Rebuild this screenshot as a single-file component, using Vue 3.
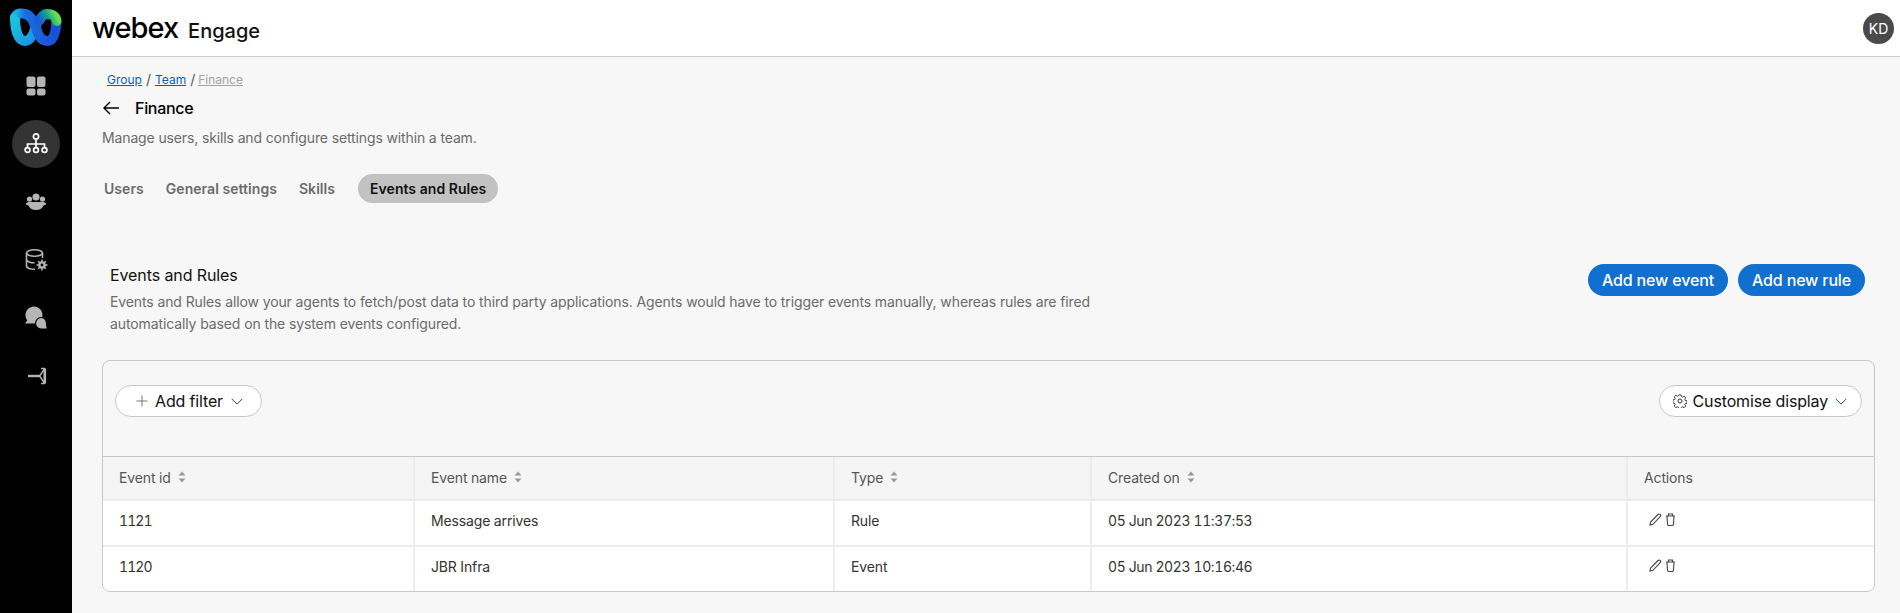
<script setup>
const navTop = ['Group', 'Team']
const tabs = ['Users', 'General settings', 'Skills']
const columns = [
  { label: 'Event id', sort: true },
  { label: 'Event name', sort: true },
  { label: 'Type', sort: true },
  { label: 'Created on', sort: true },
  { label: 'Actions', sort: false }
]
const rows = [
  { id: '1121', name: 'Message arrives', type: 'Rule', created: '05 Jun 2023 11:37:53' },
  { id: '1120', name: 'JBR Infra', type: 'Event', created: '05 Jun 2023 10:16:46' }
]
</script>

<template>
  <div class="shell">
    <aside class="rail">
      <svg class="logo" viewBox="0 0 54 40" width="54" height="40">
        <defs>
          <linearGradient id="wa" x1="0" y1="0" x2="1" y2="1">
            <stop offset="0" stop-color="#1cc4e0" />
            <stop offset="1" stop-color="#1a8fe6" />
          </linearGradient>
          <linearGradient id="wb" x1="0" y1="0" x2="1" y2="0">
            <stop offset="0" stop-color="#19b0e4" />
            <stop offset="0.22" stop-color="#1a6fe0" />
            <stop offset="1" stop-color="#1a4fd8" />
          </linearGradient>
          <linearGradient id="wc" x1="0" y1="0.6" x2="1" y2="0.4">
            <stop offset="0" stop-color="#1a5fd8" />
            <stop offset="0.5" stop-color="#12a08f" />
            <stop offset="1" stop-color="#62e04f" />
          </linearGradient>
        </defs>
        <path d="M6 9C6 22 9 33 16 33C22 33 25 25 27 18" fill="none" stroke="url(#wa)" stroke-width="10" stroke-linecap="round" />
        <path d="M7 8C9 5 13 5 16 6C22 7 25 14 27 20C29 27 32 33 38 33C45 33 47 23 47.5 13" fill="none" stroke="url(#wb)" stroke-width="10" stroke-linecap="butt" />
        <path d="M30 13C32 9 34 6 38 6C43 6 47 8 47.5 13" fill="none" stroke="url(#wc)" stroke-width="10" stroke-linecap="round" />
      </svg>

      <nav class="rail-nav">
        <button class="rail-btn">
          <svg viewBox="0 0 24 24" width="24" height="24">
            <rect x="2.5" y="2.5" width="9" height="10.5" rx="2" fill="#b5b5b5" />
            <rect x="13" y="2.5" width="8.5" height="10.5" rx="2" fill="#b5b5b5" />
            <rect x="2.5" y="14.5" width="9" height="7" rx="2" fill="#b5b5b5" />
            <rect x="13" y="14.5" width="8.5" height="7" rx="2" fill="#b5b5b5" />
          </svg>
        </button>
        <button class="rail-btn rail-btn-active">
          <svg viewBox="0 0 24 24" width="24" height="24" fill="none" stroke="#fff" stroke-width="1.7">
            <circle cx="12" cy="4.5" r="2.6" />
            <path d="M12 7v5M3.5 15v-3h17v3M12 12v3" />
            <circle cx="3.5" cy="18" r="2.4" />
            <circle cx="12" cy="18" r="2.4" />
            <circle cx="20.5" cy="18" r="2.4" />
          </svg>
        </button>
        <button class="rail-btn">
          <svg viewBox="0 0 24 24" width="24" height="24" fill="#b5b5b5">
            <circle cx="12" cy="7" r="3.6" />
            <circle cx="5.5" cy="9" r="2.6" />
            <circle cx="18.5" cy="9" r="2.6" />
            <path d="M1.5 14c2-2.500 5-2.500 6.500-2h8c1.500-.5 4.500-.5 6.500 2c-1 1-2 1.200-3 1.500c-1 3-4 4.500-7.500 4.500s-6.500-1.500-7.500-4.500c-1-.3-2-.5-3-1.500z" />
          </svg>
        </button>
        <button class="rail-btn">
          <svg viewBox="0 0 24 24" width="24" height="24" fill="none" stroke="#b5b5b5" stroke-width="1.6">
            <ellipse cx="10.5" cy="5" rx="8" ry="3.2" />
            <path d="M2.500 5v13c0 2 4 3.300 8.500 3.300M18.500 5v5M2.500 11.500c0 2 4 3.300 8 3.300" />
            <circle cx="18" cy="17" r="3.8" fill="#b5b5b5" stroke="none" />
            <circle cx="18" cy="17" r="1.4" fill="#000" stroke="none" />
            <path d="M18 11.500v2.500M18 20v2.500M12.500 17h2.500M21 17h2.500M14.200 13.200l1.700 1.700M20.100 19.100l1.700 1.700M14.200 20.800l1.700-1.700M20.100 14.900l1.700-1.700" stroke-width="1.5" />
          </svg>
        </button>
        <button class="rail-btn">
          <svg viewBox="0 0 24 24" width="24" height="24" fill="#b5b5b5">
            <path d="M10 .5c4.700 0 8.500 3.800 8.500 8.500c0 4.700-3.800 8.500-8.500 8.500H1l2.200-3c-1-1.500-1.700-3.300-1.700-5.500C1.500 4.300 5.300 .5 10 .5z" />
            <path d="M17 11.500c3 0 5.500 2.500 5.500 5.500c0 1.500 .3 3.500 1 6h-6.500c-3 0-5.500-2.500-5.500-5.500s2.500-6 5.500-6z" stroke="#000" stroke-width="1.2" />
          </svg>
        </button>
        <button class="rail-btn">
          <svg viewBox="0 0 24 24" width="24" height="24" fill="none" stroke="#b5b5b5">
            <path d="M4 12h12" stroke-width="2.4" />
            <path d="M20.500 5l-5 7l5 7" stroke-width="1.4" />
            <path d="M20.800 4.500v15" stroke-width="2.6" />
            <path d="M17 4.500h4M17 19.500h4" stroke-width="1.5" />
          </svg>
        </button>
      </nav>
    </aside>

    <div class="main">
      <header class="topbar">
        <div class="brand">
          <span class="wordmark">webex</span>
          <span class="product">Engage</span>
        </div>
        <div class="avatar">KD</div>
      </header>

      <main class="content">
        <div class="crumbs">
          <template v-for="c in navTop" :key="c">
            <a class="crumb">{{ c }}</a>
            <span class="crumb-sep">/</span>
          </template>
          <a class="crumb crumb-current">Finance</a>
        </div>

        <div class="title-row">
          <svg viewBox="0 0 16 14" width="16" height="14" fill="none" stroke="#000" stroke-width="1.4">
            <path d="M1 7h15M7 1L1 7l6 6" />
          </svg>
          <h1 class="title">Finance</h1>
        </div>
        <p class="subtitle">Manage users, skills and configure settings within a team.</p>

        <div class="tabs">
          <span v-for="t in tabs" :key="t" class="tab">{{ t }}</span>
          <span class="tab tab-active">Events and Rules</span>
        </div>

        <section class="intro">
          <div class="intro-text">
            <h2 class="intro-title">Events and Rules</h2>
            <p class="intro-desc">Events and Rules allow your agents to fetch/post data to third party applications. Agents would have to trigger events manually, whereas rules are fired automatically based on the system events configured.</p>
          </div>
          <div class="intro-actions">
            <button class="primary">Add new event</button>
            <button class="primary">Add new rule</button>
          </div>
        </section>

        <section class="card">
          <div class="toolbar">
            <button class="pill pill-filter">
              <svg viewBox="0 0 12 12" width="12" height="12" fill="none" stroke="#777" stroke-width="1">
                <path d="M6 .5v11M.5 6h11" />
              </svg>
              <span>Add filter</span>
              <svg class="chev" viewBox="0 0 14 8" width="14" height="8" fill="none" stroke="#222" stroke-width="1">
                <path d="M1 1l6 6 6-6" />
              </svg>
            </button>
            <button class="pill pill-gear">
              <svg viewBox="0 0 16 16" width="14" height="14" fill="none" stroke="#333" stroke-width="1.1">
                <circle cx="8" cy="8" r="2.3" />
                <path d="M6.700 1h2.600l.4 2 1.400.6 1.700-1.100 1.800 1.800-1.100 1.700.6 1.400 2 .4v2.600l-2 .4-.6 1.400 1.100 1.700-1.800 1.800-1.700-1.100-1.400.6-.4 2H6.700l-.4-2-1.400-.6-1.700 1.100-1.800-1.800 1.100-1.700-.6-1.400-2-.4V6.700l2-.4.6-1.400-1.100-1.700 1.800-1.800 1.700 1.100 1.400-.6z" />
              </svg>
              <span>Customise display</span>
              <svg class="chev" viewBox="0 0 14 8" width="14" height="8" fill="none" stroke="#222" stroke-width="1">
                <path d="M1 1l6 6 6-6" />
              </svg>
            </button>
          </div>

          <div class="table">
            <div class="row head">
              <div v-for="col in columns" :key="col.label" class="cell">
                <span>{{ col.label }}</span>
                <svg v-if="col.sort" class="sort" viewBox="0 0 8 12" width="8" height="12" fill="#999">
                  <path d="M4 .5L7.500 4.500H.5zM4 11.500L.5 7.500h7z" />
                </svg>
              </div>
            </div>
            <div v-for="r in rows" :key="r.id" class="row body">
              <div class="cell cell-id">{{ r.id }}</div>
              <div class="cell">{{ r.name }}</div>
              <div class="cell">{{ r.type }}</div>
              <div class="cell cell-date">{{ r.created }}</div>
              <div class="cell cell-actions">
                <svg viewBox="0 0 13 13" width="13" height="13" fill="none" stroke="#444" stroke-width="1.1">
                  <path d="M1 12l.6-3L9 1.500c.6-.6 1.600-.6 2.200 0s.6 1.600 0 2.200L3.900 11.300z" />
                </svg>
                <svg viewBox="0 0 11 13" width="11" height="13" fill="none" stroke="#444" stroke-width="1.1">
                  <path d="M1 3h9M3.500 3V1h4v2M2 3l.5 8c0 .8.600 1.500 1.500 1.500h3c.9 0 1.500-.7 1.500-1.500L9 3" />
                </svg>
              </div>
            </div>
          </div>
        </section>
      </main>
    </div>
  </div>
</template>

<style>
html, body { margin: 0; background: #f7f7f7; }
</style>

<style scoped>
.shell { display: flex; height: 613px; overflow: hidden; font-family: Inter, "Liberation Sans", sans-serif; color: #000; }
.rail { flex: 0 0 72px; background: #000; display: flex; flex-direction: column; align-items: center; padding-top: 8px; box-sizing: border-box; }
.logo { display: block; margin-bottom: 14px; }
.rail-nav { display: flex; flex-direction: column; align-items: center; gap: 10px; }
.rail-btn { width: 48px; height: 48px; border: 0; border-radius: 50%; background: transparent; padding: 0; display: flex; align-items: center; justify-content: center; }
.rail-btn-active { background: #333; }
.main { flex: 1; min-width: 0; display: flex; flex-direction: column; background: #f7f7f7; }
.topbar { height: 57px; flex: 0 0 57px; box-sizing: border-box; background: #fff; border-bottom: 1px solid #ccc; display: flex; align-items: center; justify-content: space-between; padding: 0 6px 0 20px; }
.brand { display: flex; align-items: baseline; gap: 10px; }
.wordmark { font-size: 29px; font-weight: 500; letter-spacing: -1px; line-height: 32px; }
.product { font-size: 20px; font-weight: 500; line-height: 24px; color: #111; }
.avatar { width: 31px; height: 31px; border-radius: 50%; background: #4a4a4a; color: #fff; font-size: 14px; display: flex; align-items: center; justify-content: center; }
.content { flex: 1; padding: 15px 25px 0 30px; min-width: 0; }
.crumbs { display: flex; align-items: center; gap: 4px; font-size: 12px; line-height: 16px; margin-left: 5px; }
.crumb { color: #0a5fb4; text-decoration: underline; }
.crumb-sep { color: #555; font-size: 14px; }
.crumb-current { color: #a3a3a3; margin-left: -1px; }
.title-row { display: flex; align-items: center; gap: 16px; margin: 8px 0 0 1px; height: 24px; }
.title { margin: 0; font-size: 16px; font-weight: 500; line-height: 24px; letter-spacing: -0.3px; }
.subtitle { margin: 8px 0 0; font-size: 14px; line-height: 20px; color: #6b6b6b; letter-spacing: -0.13px; }
.tabs { display: flex; align-items: center; gap: 7px; margin: 26px 0 0 -1px; height: 29px; }
.tab { padding: 0 3px; margin-right: 9px; font-size: 14px; font-weight: 600; color: #6b6b6b; line-height: 20px; letter-spacing: 0.05px; }
.tab-active { margin: 0 0 0 4px; padding: 0 12px; background: #c2c2c2; color: #111; border-radius: 15px; line-height: 29px; }
.intro { display: flex; justify-content: space-between; align-items: flex-start; margin: 60px 10px 0 8px; }
.intro-text { width: 1010px; }
.intro-title { margin: 0; font-size: 16px; font-weight: 400; line-height: 24px; color: #111; letter-spacing: -0.1px; }
.intro-desc { margin: 4px 0 0; font-size: 14px; line-height: 22px; color: #6b6b6b; letter-spacing: -0.11px; }
.intro-actions { display: flex; gap: 10px; margin-top: 1px; }
.primary { height: 32px; border: 0; border-radius: 16px; background: #1170cf; color: #fff; font: 500 16px Inter, "Liberation Sans", sans-serif; letter-spacing: -0.15px; padding: 0 14px; }
.card { margin-top: 25px; border: 1px solid #c8c8c8; border-radius: 8px; overflow: hidden; background: #f7f7f7; }
.toolbar { height: 95px; box-sizing: border-box; display: flex; justify-content: space-between; align-items: flex-start; padding: 24px 12px 0 12px; }
.pill { height: 32px; display: flex; align-items: center; background: #fff; border: 1px solid #c8c8c8; border-radius: 16px; font: 400 16px Inter, "Liberation Sans", sans-serif; letter-spacing: -0.15px; color: #111; }
.pill-filter { padding: 0 17px 0 20px; gap: 7px; }
.pill-gear { padding: 0 13px 0 13px; gap: 6px; }
.chev { height: 7px; }
.row { display: grid; grid-template-columns: 310px 420px 257px 536px 1fr; box-sizing: border-box; }
.head { height: 43px; border-top: 1px solid #c8c8c8; background: #f5f5f5; }
.body { height: 46px; background: #fff; border-top: 2px solid #ececec; }
.cell { display: flex; align-items: center; gap: 7px; padding: 0 0 0 16px; font-size: 14px; letter-spacing: -0.14px; font-variant-numeric: tabular-nums; color: #333; border-left: 2px solid #ececec; box-sizing: border-box; }
.head .cell { color: #555; padding-bottom: 2px; }
.body .cell { padding-bottom: 5px; }
.cell:first-child { border-left: 0; }
.body .cell-id { letter-spacing: -0.9px; }
.body .cell-date { letter-spacing: -0.4px; }
.body .cell-actions { gap: 3px; padding: 12px 0 0 21px; align-items: flex-start; }
.sort { flex: none; }
</style>
